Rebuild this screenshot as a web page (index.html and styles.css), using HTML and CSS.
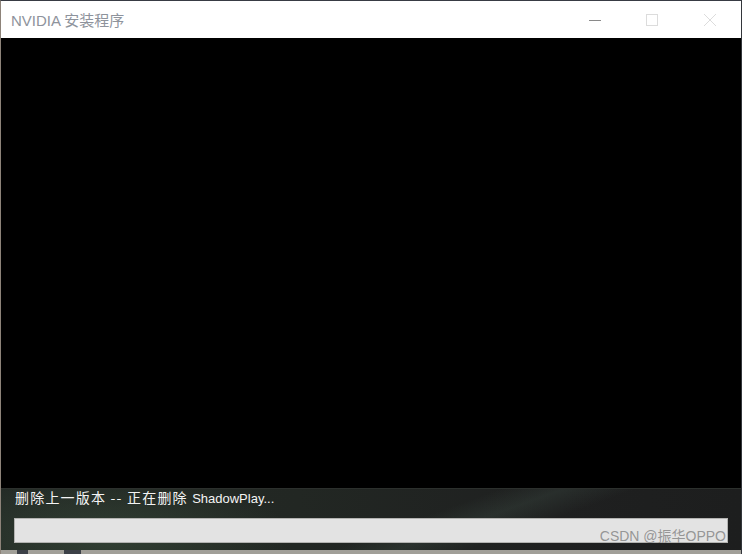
FILE: index.html
```html
<!DOCTYPE html>
<html lang="zh-CN">
<head>
  <meta charset="UTF-8">
  <title>NVIDIA 安装程序</title>
  <link rel="stylesheet" href="styles.css">
</head>
<body>
  <div class="window">
    <div class="titlebar">
      <span class="title">NVIDIA 安装程序</span>
      <div class="controls">
        <span class="ctl">
          <svg width="12" height="12" viewBox="0 0 12 12"><path d="M0 6.5h12" stroke="#8a8a8a" stroke-width="1"/></svg>
        </span>
        <span class="ctl">
          <svg width="12" height="12" viewBox="0 0 12 12"><rect x="0.5" y="0.5" width="11" height="11" fill="none" stroke="#dcdcdc" stroke-width="1"/></svg>
        </span>
        <span class="ctl">
          <svg width="12" height="12" viewBox="0 0 12 12"><path d="M0 0L12 12M12 0L0 12" stroke="#dcdcdc" stroke-width="1"/></svg>
        </span>
      </div>
    </div>

    <div class="stage"></div>

    <div class="footer">
      <div class="status">删除上一版本 -- 正在删除 <span class="latin">ShadowPlay...</span></div>
      <div class="progress"></div>
      <span class="watermark">CSDN @振华OPPO</span>
    </div>

    <div class="desk">
      <span class="blot b1"></span>
      <span class="blot b2"></span>
    </div>
  </div>
</body>
</html>
```

FILE: styles.css
```css
html, body {
  margin: 0;
  padding: 0;
  background: #2b2d31;
}

.window {
  width: 742px;
  height: 554px;
  box-sizing: border-box;
  border-top: 1px solid #383b44;
  border-left: 1px solid #8d8379;
  border-right: 1px solid #33363b;
  display: flex;
  flex-direction: column;
  position: relative;
  font-family: "Microsoft YaHei", "Noto Sans CJK SC", "Liberation Sans", sans-serif;
}

.titlebar {
  height: 37px;
  background: #ffffff;
  display: flex;
  align-items: center;
  justify-content: space-between;
  flex-shrink: 0;
}

.title {
  margin-left: 10px;
  margin-top: -1px;
  font-size: 15px;
  color: #8e939c;
  font-family: "Liberation Sans", "Noto Sans CJK SC", sans-serif;
}

.controls {
  display: flex;
  margin-right: 2px;
}

.ctl {
  width: 58px;
  height: 37px;
  display: flex;
  align-items: center;
  justify-content: center;
}

.ctl:first-child {
  margin-right: -1px;
}

.stage {
  height: 450px;
  background: #000000;
  flex-shrink: 0;
}

.footer {
  height: 62px;
  flex-shrink: 0;
  position: relative;
  background:
    radial-gradient(ellipse 260px 90px at 110px 50px, rgba(60, 80, 62, 0.55), transparent 70%),
    linear-gradient(160deg, rgba(0,0,0,0) 55%, rgba(70, 90, 80, 0.25) 62%, rgba(0,0,0,0) 70%),
    linear-gradient(90deg, #242b26 0%, #222723 40%, #1f2020 75%, #1d1e1e 100%);
  border-top: 1px solid #2c302d;
  box-sizing: border-box;
  padding: 0 13px 0 13px;
}

.status {
  color: #f4f4f4;
  font-size: 14px;
  line-height: 18px;
  height: 18px;
  overflow: hidden;
  margin-top: -1px;
  margin-left: 1px;
  letter-spacing: 1.2px;
}

.latin {
  font-family: "Liberation Sans", sans-serif;
  font-size: 13px;
  letter-spacing: 0;
}

.progress {
  margin-top: 12px;
  height: 25px;
  box-sizing: border-box;
  background: #e3e3e3;
  border: 1px solid #b3b3b1;
}

.watermark {
  position: absolute;
  right: 15px;
  top: 36px;
  font-size: 14px;
  color: rgba(140, 140, 140, 0.9);
  font-family: "Liberation Sans", "Noto Sans CJK SC", sans-serif;
}

.desk {
  flex: 1;
  background: #a19f98;
  position: relative;
}

.blot {
  position: absolute;
  top: 0;
  height: 4px;
  background: #3c4047;
}

.b1 { left: 16px; width: 11px; }
.b2 { left: 63px; width: 17px; }
```
